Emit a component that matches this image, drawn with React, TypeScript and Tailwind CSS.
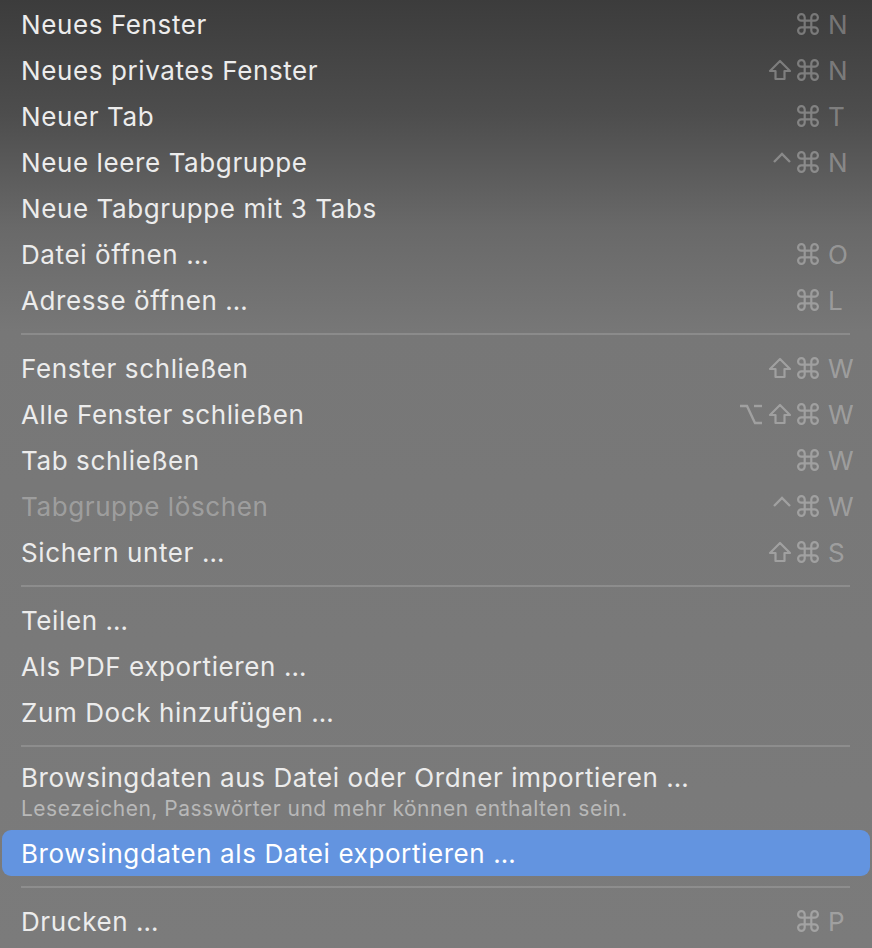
import React from "react";

type Mod = "cmd" | "shift" | "ctrl" | "opt";

type Item = {
  label: string;
  mods?: Mod[];
  keyChar?: string;
  disabled?: boolean;
  hint?: string;
  active?: boolean;
};

const groups: Item[][] = [
  [
    { label: "Neues Fenster", mods: ["cmd"], keyChar: "N" },
    { label: "Neues privates Fenster", mods: ["shift", "cmd"], keyChar: "N" },
    { label: "Neuer Tab", mods: ["cmd"], keyChar: "T" },
    { label: "Neue leere Tabgruppe", mods: ["ctrl", "cmd"], keyChar: "N" },
    { label: "Neue Tabgruppe mit 3 Tabs" },
    { label: "Datei öffnen …", mods: ["cmd"], keyChar: "O" },
    { label: "Adresse öffnen …", mods: ["cmd"], keyChar: "L" },
  ],
  [
    { label: "Fenster schließen", mods: ["shift", "cmd"], keyChar: "W" },
    { label: "Alle Fenster schließen", mods: ["opt", "shift", "cmd"], keyChar: "W" },
    { label: "Tab schließen", mods: ["cmd"], keyChar: "W" },
    { label: "Tabgruppe löschen", mods: ["ctrl", "cmd"], keyChar: "W", disabled: true },
    { label: "Sichern unter …", mods: ["shift", "cmd"], keyChar: "S" },
  ],
  [
    { label: "Teilen …" },
    { label: "Als PDF exportieren …" },
    { label: "Zum Dock hinzufügen …" },
  ],
  [
    {
      label: "Browsingdaten aus Datei oder Ordner importieren …",
      hint: "Lesezeichen, Passwörter und mehr können enthalten sein.",
    },
    { label: "Browsingdaten als Datei exportieren …", active: true },
  ],
  [{ label: "Drucken …", mods: ["cmd"], keyChar: "P" }],
];

function ModIcon({ mod }: { mod: Mod }) {
  const common = {
    fill: "none",
    stroke: "currentColor",
    strokeLinecap: "round" as const,
    strokeLinejoin: "round" as const,
  };
  if (mod === "cmd")
    return (
      <svg width="22" height="22" viewBox="2 2 20 20" strokeWidth={2} {...common}>
        <path d="M15 6v12a3 3 0 1 0 3-3H6a3 3 0 1 0 3 3V6a3 3 0 1 0-3 3h12a3 3 0 1 0-3-3" />
      </svg>
    );
  if (mod === "shift")
    return (
      <svg width="24" height="22" viewBox="0 0 24 22" strokeWidth={2.2} {...common}>
        <path d="M12 2 L22 12 H16.5 V20 H7.5 V12 H2 Z" />
      </svg>
    );
  if (mod === "ctrl")
    return (
      <svg width="20" height="22" viewBox="0 0 20 22" strokeWidth={2.4} {...common}>
        <path d="M2 11 L10 3 L18 11" strokeLinecap="butt" strokeLinejoin="miter" />
      </svg>
    );
  return (
    <svg width="24" height="22" viewBox="0 0 24 22" strokeWidth={2.4} {...common}>
      <path d="M1 3 H8 L16 20 H23" strokeLinecap="butt" strokeLinejoin="miter" />
      <path d="M15 3 H23" strokeLinecap="butt" />
    </svg>
  );
}

function Row({ item }: { item: Item }) {
  const labelColor = item.active
    ? "text-white"
    : item.disabled
      ? "text-white/30"
      : "text-[#ececec]";
  return (
    <div
      className={`flex items-center h-[46px] pl-[19px] pr-[12px] mx-[2px] rounded-[9px] ${
        item.active ? "bg-[#6394e0]" : ""
      }`}
    >
      <span className={`flex-1 tracking-[0.6px] ${labelColor}`}>{item.label}</span>
      {item.keyChar && (
        <div className="flex items-center text-white/30">
          <div className="flex items-center gap-[5px]">
            {item.mods?.map((m, i) => <ModIcon key={i} mod={m} />)}
          </div>
          <span className="w-[30px] ml-[9px] text-left">{item.keyChar}</span>
        </div>
      )}
    </div>
  );
}

function HintRow({ item }: { item: Item }) {
  return (
    <div className="flex flex-col pl-[21px] pt-[1px] pb-[10px]">
      <span className="h-[40px] leading-[40px] tracking-[0.6px] text-[#ececec]">
        {item.label}
      </span>
      <span className="h-[22px] leading-[22px] text-[21px] tracking-[0.5px] text-[#b8b8b8]">
        {item.hint}
      </span>
    </div>
  );
}

function Separator() {
  return (
    <div className="py-[10px] pl-[21px] pr-[22px]">
      <div className="h-[2px] bg-white/15" />
    </div>
  );
}

export default function App() {
  return (
    <div
      className="w-[872px] h-[948px] overflow-hidden pt-[1px] text-[26px] bg-[linear-gradient(to_bottom,#3c3c3c_0%,#4d4d4d_12%,#696969_24%,#777777_35%,#7b7b7b_100%)]"
      style={{ fontFamily: "Inter, 'Noto Sans', sans-serif" }}
    >
      {groups.map((group, gi) => (
        <div key={gi}>
          {gi > 0 && <Separator />}
          {group.map((item, ii) =>
            item.hint ? <HintRow key={ii} item={item} /> : <Row key={ii} item={item} />,
          )}
        </div>
      ))}
    </div>
  );
}
